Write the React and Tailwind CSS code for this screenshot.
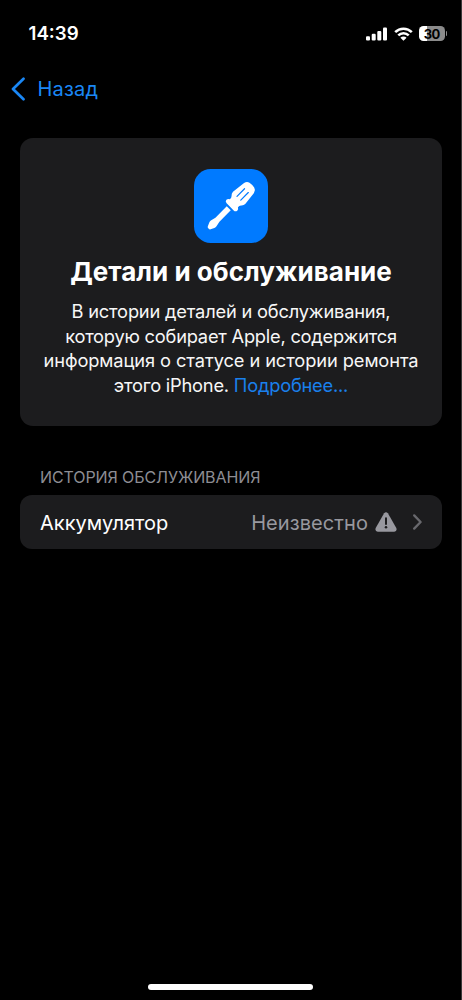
function CellularIcon() {
  return (
    <svg className="block h-[14px] w-[21px]" viewBox="0 0 21 14" fill="#fff">
      <rect x="0" y="9.2" width="4" height="4.4" rx="1.1" />
      <rect x="5.7" y="6.8" width="4" height="6.8" rx="1.1" />
      <rect x="11.3" y="4" width="4" height="9.6" rx="1.1" />
      <rect x="17" y="0.6" width="4" height="13" rx="1.1" />
    </svg>
  );
}

function WifiIcon() {
  return (
    <svg className="ml-[7px] block h-[14px] w-[19px]" viewBox="0 0 19 14" fill="none" stroke="#fff" strokeWidth="2.6">
      <path d="M1.2 5.1a11.8 11.8 0 0 1 16.6 0" />
      <path d="M4.3 8.4a7.4 7.4 0 0 1 10.4 0" />
      <path d="M9.5 13.8 6.4 10.8a4.4 4.4 0 0 1 6.2 0Z" fill="#fff" stroke="none" />
    </svg>
  );
}

function Battery() {
  return (
    <div className="ml-[6px] flex items-center">
      <div className="flex h-[15px] w-[25.5px] items-center justify-center rounded-[4.5px] bg-[linear-gradient(90deg,#fff_30%,#8b8b8b_30%)] pt-px text-[13px] leading-none font-bold tracking-[-0.5px] text-black">
        30
      </div>
      <div className="ml-[1px] h-[5px] w-[1.5px] rounded-r-full bg-[#8b8b8b]" />
    </div>
  );
}

function ScrewdriverTile() {
  return (
    <svg className="block h-[74px] w-[74px]" viewBox="0 0 222 222">
      <rect width="222" height="222" rx="50" fill="#007aff" />
      <g transform="translate(110.6 111.6) rotate(45)" fill="#fff">
        <path d="M-10 -89Q0 -91 10 -89Q19 -87 21 -77L26 -35Q26 -28 20 -23Q16 -19 17 -13Q23 -10 23 -4Q22 3 15 3H-15Q-22 3 -23 -4Q-23 -10 -17 -13Q-16 -19 -20 -23Q-26 -28 -26 -35L-21 -77Q-19 -87 -10 -89Z" />
        <path d="M-8.5 9H8.5V57L12 73Q13 77 11 81L6 92Q5 95 0 95Q-5 95 -6 92L-11 81Q-13 77 -12 73L-8.5 57Z" />
        <path d="M-8 -66V-34M8 -66V-34" stroke="#007aff" strokeWidth="3.6" strokeLinecap="round" />
      </g>
    </svg>
  );
}

function WarningIcon() {
  return (
    <svg className="block h-[20px] w-[22px]" viewBox="0 0 22 20">
      <path d="M9.1 1.3Q11 -1 12.9 1.3L21.3 16Q22.3 19.4 19.3 19.7H2.7Q-.3 19.4 .7 16Z" fill="#98989f" />
      <path d="M11 6.3V12" stroke="#1c1c1e" strokeWidth="2" strokeLinecap="round" />
      <circle cx="11" cy="15.3" r="1.25" fill="#1c1c1e" />
    </svg>
  );
}

export default function App() {
  return (
    <div className="flex h-[1000px] w-[462px] flex-col border-r border-[#3a3a3a] bg-black font-['Inter','Liberation_Sans',sans-serif] text-white">
      <header className="flex h-[67px] items-center justify-between pr-[14px] pl-[28.5px]">
        <span className="pt-[1.5px] text-[18.7px] leading-none font-semibold">14:39</span>
        <div className="flex items-center">
          <CellularIcon />
          <WifiIcon />
          <Battery />
        </div>
      </header>

      <nav className="flex h-[44px] items-center pl-[11px] text-[#1a87f5]">
        <svg className="block h-[24px] w-[15px]" viewBox="0 0 15 24" fill="none" stroke="currentColor" strokeWidth="2.7" strokeLinecap="round" strokeLinejoin="round">
          <path d="M12.5 1.8 2 12 12.5 22.2" />
        </svg>
        <span className="ml-[11.5px] text-[20px] leading-none tracking-[0.2px]">Назад</span>
      </nav>

      <main className="pr-[19px] pl-[20px]">
        <section className="mt-[27px] flex h-[288px] flex-col items-center rounded-[13px] bg-[#1c1c1e] pt-[31px] text-center">
          <ScrewdriverTile />
          <h1 className="mt-[13px] text-[26px] leading-[32px] font-bold tracking-[0.03px] whitespace-nowrap">Детали и обслуживание</h1>
          <p className="mt-[11px] text-[18.3px] leading-[24.6px] whitespace-nowrap text-[#f7f7f7]">
            <span className="tracking-[-0.2px]">В истории деталей и обслуживания,</span>
            <br />
            <span className="tracking-[-0.23px]">которую собирает Apple, содержится</span>
            <br />
            <span className="tracking-[-0.1px]">информация о статусе и истории ремонта</span>
            <br />
            <span className="tracking-[-0.22px]">
              этого iPhone. <a className="text-[#1a80ec]">Подробнее...</a>
            </span>
          </p>
        </section>

        <h2 className="mt-[41px] pl-[20px] text-[16px] leading-[20px] tracking-[-0.1px] text-[#8d8d93]">ИСТОРИЯ ОБСЛУЖИВАНИЯ</h2>
        <section className="mt-[8px] flex h-[54px] items-center rounded-[12px] bg-[#1c1c1e] pr-[20px] pl-[20px] text-[20px]">
          <span className="pt-px">Аккумулятор</span>
          <span className="mr-[7px] ml-auto pt-px tracking-[0.08px] text-[#98989f]">Неизвестно</span>
          <WarningIcon />
          <svg className="ml-[16px] block h-[16px] w-[9px]" viewBox="0 0 9 16" fill="none" stroke="#68686d" strokeWidth="2.3" strokeLinecap="round" strokeLinejoin="round">
            <path d="M1.2 1.4 7.6 8 1.2 14.6" />
          </svg>
        </section>
      </main>

      <div className="mx-auto mt-auto mb-[10px] h-[6px] w-[165px] rounded-full bg-white" />
    </div>
  );
}
